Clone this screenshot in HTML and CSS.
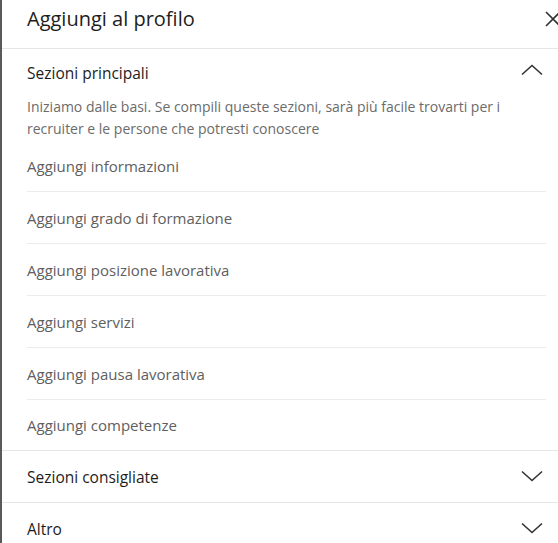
FILE: index.html
```html
<!DOCTYPE html>
<html lang="it">
<head>
<meta charset="utf-8">
<title>Aggiungi al profilo</title>
<link rel="stylesheet" href="styles.css">
</head>
<body>
<div class="modal">
  <header class="modal-header">
    <h2 class="modal-title">Aggiungi al profilo</h2>
    <svg class="close" width="16" height="16" viewBox="0 0 16 16"><path d="M1 1 L15 15 M15 1 L1 15" stroke="#333" stroke-width="1.6" fill="none"/></svg>
  </header>
  <section class="section open">
    <div class="section-head">
      <span>Sezioni principali</span>
      <svg class="chev" width="24" height="12" viewBox="0 0 24 12"><path d="M2 10.5 L12 1.5 L22 10.5" stroke="#333" stroke-width="1.6" fill="none"/></svg>
    </div>
    <p class="desc">Iniziamo dalle basi. Se compili queste sezioni, sarà più facile trovarti per i recruiter e le persone che potresti conoscere</p>
    <ul class="items">
      <li>Aggiungi informazioni</li>
      <li>Aggiungi grado di formazione</li>
      <li>Aggiungi posizione lavorativa</li>
      <li>Aggiungi servizi</li>
      <li>Aggiungi pausa lavorativa</li>
      <li>Aggiungi competenze</li>
    </ul>
  </section>
  <section class="section">
    <div class="section-head collapsed">
      <span>Sezioni consigliate</span>
      <svg class="chev" width="24" height="12" viewBox="0 0 24 12"><path d="M2 1.5 L12 10.5 L22 1.5" stroke="#333" stroke-width="1.6" fill="none"/></svg>
    </div>
  </section>
  <section class="section">
    <div class="section-head collapsed">
      <span>Altro</span>
      <svg class="chev" width="24" height="12" viewBox="0 0 24 12"><path d="M2 1.5 L12 10.5 L22 1.5" stroke="#333" stroke-width="1.6" fill="none"/></svg>
    </div>
  </section>
</div>
</body>
</html>
```
FILE: styles.css
```css
html, body {
  margin: 0;
  padding: 0;
  background: #fff;
  overflow: hidden;
}
body {
  font-family: "Open Sans", "Noto Sans", sans-serif;
  width: 558px;
  height: 543px;
}
.modal {
  border-left: 2px solid #5a5a5a;
  height: 543px;
  box-sizing: border-box;
}
.modal-header {
  height: 49px;
  border-bottom: 1px solid #e6e6e6;
  display: flex;
  align-items: flex-start;
  justify-content: space-between;
  padding-left: 25px;
  box-sizing: border-box;
  overflow: hidden;
}
.modal-title {
  margin: 0;
  font-size: 20px;
  font-weight: 400;
  color: #1d1d1d;
  line-height: 37px;
}
.close {
  margin-top: 11px;
  margin-right: -3px;
  flex: none;
}
.section {
  border-bottom: 1px solid #e6e6e6;
}
.section:last-child {
  border-bottom: none;
}
.section-head {
  height: 47px;
  display: flex;
  align-items: center;
  justify-content: space-between;
  padding: 0 14px 0 25px;
  font-size: 15.5px;
  color: #1d1d1d;
}
.section-head .chev {
  margin-top: -6px;
}
.section-head.collapsed {
  height: 51px;
}
.section-head.collapsed .chev {
  margin-top: -1px;
}
.desc {
  margin: 0;
  padding: 0 40px 0 25px;
  font-size: 14px;
  line-height: 22px;
  color: #6b6b6b;
}
.items {
  list-style: none;
  margin: 0;
  padding: 0;
}
.items li {
  margin-left: 25px;
  margin-right: 12px;
  height: 51px;
  display: flex;
  align-items: center;
  font-size: 15px;
  color: #606060;
  border-bottom: 1px solid #ececec;
}
.items li:last-child {
  border-bottom: none;
  height: 50px;
}
```
